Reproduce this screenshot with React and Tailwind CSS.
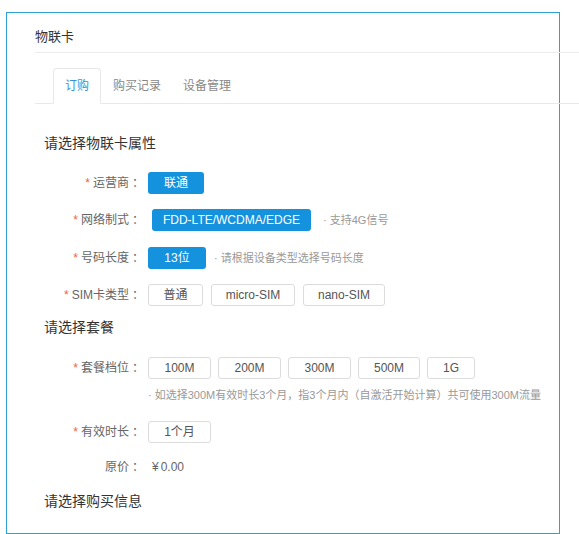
import React from "react";

const FONT = { fontFamily: "'Liberation Sans','Noto Sans CJK SC',sans-serif" };

function Label({ children, req = true }) {
  return (
    <div className="w-[109px] shrink-0 text-right text-[12px] text-[#666] leading-[16px] whitespace-nowrap">
      {req && <span className="text-[#f0643c] mr-[3px]">*</span>}
      {children}
      <span className="ml-[3px]">：</span>
    </div>
  );
}

function Primary({ w, children, extra = "" }) {
  return (
    <div
      className={`h-[22px] ${w} ${extra} rounded-[3px] bg-[#1592de] text-white text-[12px] flex items-center justify-center`}
    >
      {children}
    </div>
  );
}

function Outline({ w, children }) {
  return (
    <div
      className={`h-[22px] ${w} rounded-[3px] border border-[#dcdcdc] bg-white text-[#555] text-[12px] flex items-center justify-center`}
    >
      {children}
    </div>
  );
}

function Row({ label, mt, children, req }) {
  return (
    <div className={`flex items-center ${mt}`}>
      <Label req={req}>{label}</Label>
      <div className="ml-[4px] flex items-center">{children}</div>
    </div>
  );
}

export default function App() {
  return (
    <div className="w-[579px] h-[534px] bg-white overflow-hidden" style={FONT}>
      <div className="ml-[6px] mt-[12px] w-[554px] h-[522px] border border-[#2ea1d4] pl-[28px]">
        <div className="w-[544px]">
          {/* header */}
          <div className="h-[40px] border-b border-[#ececec] pt-[16px]">
            <div className="text-[13px] leading-[16px] text-[#333]">物联卡</div>
          </div>
          {/* tabs */}
          <div className="h-[51px] border-b border-[#e8e8e8] pt-[14px] pl-[18px] flex items-end">
            <div className="h-[36px] -mb-px px-[11px] border border-[#e8e8e8] border-b-white bg-white rounded-t-[4px] flex items-center text-[12px] text-[#3d8fd6]">
              订购
            </div>
            <div className="h-[36px] -mb-px pl-[12px] pr-[9px] flex items-center text-[12px] text-[#888]">
              购买记录
            </div>
            <div className="h-[36px] -mb-px pl-[13px] pr-[12px] flex items-center text-[12px] text-[#888]">
              设备管理
            </div>
          </div>

          <div className="pl-[9px] mt-[29px] text-[14px] leading-[20px] text-[#333]">请选择物联卡属性</div>

          <Row label="运营商" mt="mt-[19px]">
            <Primary w="w-[56px]">联通</Primary>
          </Row>
          <Row label="网络制式" mt="mt-[15px]">
            <Primary w="w-[159px]" extra="ml-[4px]">FDD-LTE/WCDMA/EDGE</Primary>
            <span className="ml-[12px] text-[11px] text-[#999]">· 支持4G信号</span>
          </Row>
          <Row label="号码长度" mt="mt-[16px]">
            <Primary w="w-[58px]">13位</Primary>
            <span className="ml-[8px] text-[11px] text-[#999]">· 请根据设备类型选择号码长度</span>
          </Row>
          <Row label="SIM卡类型" mt="mt-[15px]">
            <div className="flex gap-[8px]">
              <Outline w="w-[55px]">普通</Outline>
              <Outline w="w-[84px]">micro-SIM</Outline>
              <Outline w="w-[82px]">nano-SIM</Outline>
            </div>
          </Row>

          <div className="pl-[9px] mt-[11px] text-[14px] leading-[20px] text-[#333]">请选择套餐</div>

          <Row label="套餐档位" mt="mt-[20px]">
            <div className="flex gap-[7px]">
              <Outline w="w-[63px]">100M</Outline>
              <Outline w="w-[63px]">200M</Outline>
              <Outline w="w-[63px]">300M</Outline>
              <Outline w="w-[62px]">500M</Outline>
              <Outline w="w-[48px]">1G</Outline>
            </div>
          </Row>
          <div className="mt-[8px] pl-[113px] text-[11px] leading-[16px] text-[#999] whitespace-nowrap">
            · 如选择300M有效时长3个月，指3个月内（自激活开始计算）共可使用300M流量
          </div>

          <Row label="有效时长" mt="mt-[18px]">
            <Outline w="w-[63px]">1个月</Outline>
          </Row>
          <Row label="原价" mt="mt-[13px]" req={false}>
            <div className="h-[22px] flex items-center ml-[4px] text-[12px] text-[#666]">
              ¥<span className="ml-[2px]">0.00</span>
            </div>
          </Row>

          <div className="pl-[9px] mt-[13px] text-[14px] leading-[20px] text-[#333]">请选择购买信息</div>
        </div>
      </div>
    </div>
  );
}
